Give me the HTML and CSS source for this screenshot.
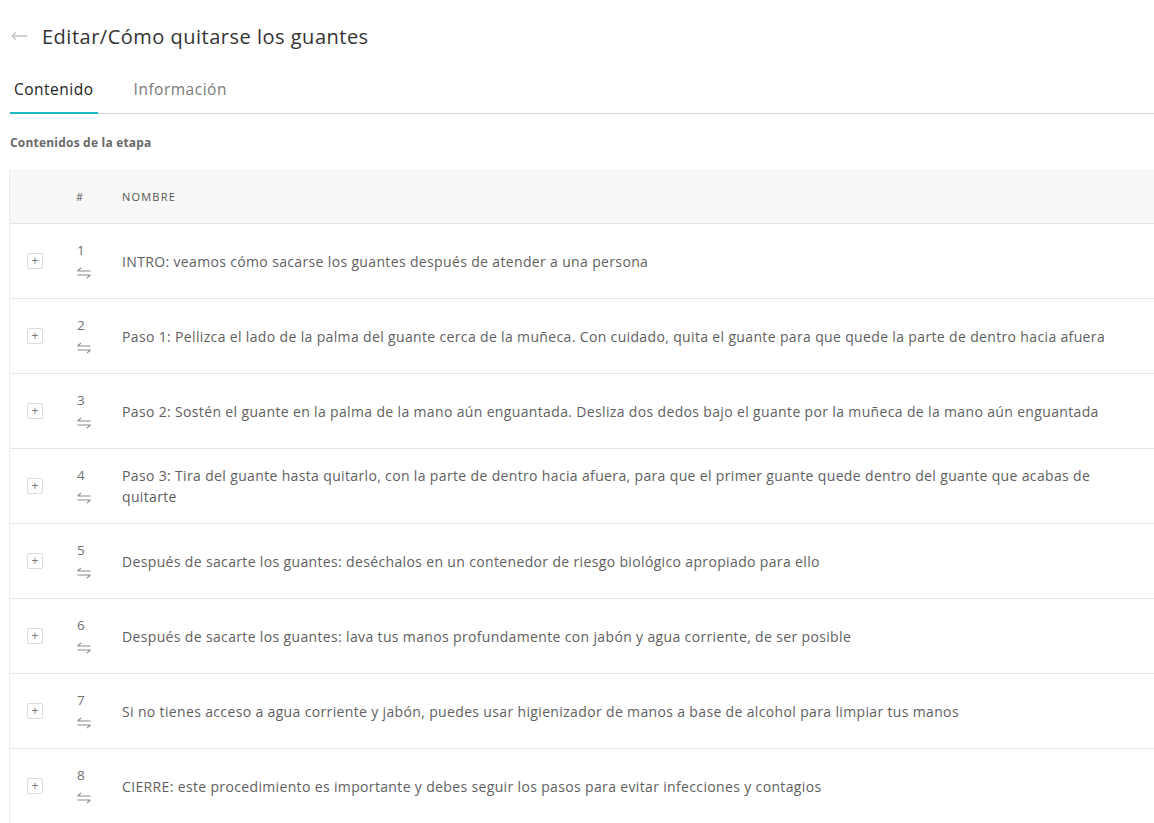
FILE: index.html
```html
<!DOCTYPE html>
<html lang="es">
<head>
<meta charset="utf-8">
<title>Editar/Cómo quitarse los guantes</title>
<link rel="stylesheet" href="styles.css">
</head>
<body>
<header class="page-header">
  <svg class="back" width="17" height="10" viewBox="0 0 17 10"><path d="M16.5 5H1.2M5 1.2L1.2 5L5 8.8" fill="none" stroke="#c4c4c4" stroke-width="1.3"/></svg>
  <h1 class="title">Editar/Cómo quitarse los guantes</h1>
</header>
<nav class="tabs">
  <div class="tab active">Contenido</div>
  <div class="tab">Información</div>
</nav>
<h2 class="section-label">Contenidos de la etapa</h2>
<div class="table">
  <div class="thead">
    <div></div>
    <div class="th">#</div>
    <div class="th">NOMBRE</div>
  </div>
  <div class="row">
    <div class="cell-btn"><span class="plus">+</span></div>
    <div class="cell-num"><span>1</span><svg class="swap" viewBox="0 0 14 12"><path d="M0.5 4H13.5M0.5 4L4.2 0.8M13.5 8H0.5M13.5 8L9.8 11.2" fill="none" stroke="#8a8a8a" stroke-width="1.1"/></svg></div>
    <div class="cell-name">INTRO: veamos cómo sacarse los guantes después de atender a una persona</div>
  </div>
  <div class="row">
    <div class="cell-btn"><span class="plus">+</span></div>
    <div class="cell-num"><span>2</span><svg class="swap" viewBox="0 0 14 12"><path d="M0.5 4H13.5M0.5 4L4.2 0.8M13.5 8H0.5M13.5 8L9.8 11.2" fill="none" stroke="#8a8a8a" stroke-width="1.1"/></svg></div>
    <div class="cell-name">Paso 1: Pellizca el lado de la palma del guante cerca de la muñeca. Con cuidado, quita el guante para que quede la parte de dentro hacia afuera</div>
  </div>
  <div class="row">
    <div class="cell-btn"><span class="plus">+</span></div>
    <div class="cell-num"><span>3</span><svg class="swap" viewBox="0 0 14 12"><path d="M0.5 4H13.5M0.5 4L4.2 0.8M13.5 8H0.5M13.5 8L9.8 11.2" fill="none" stroke="#8a8a8a" stroke-width="1.1"/></svg></div>
    <div class="cell-name">Paso 2: Sostén el guante en la palma de la mano aún enguantada. Desliza dos dedos bajo el guante por la muñeca de la mano aún enguantada</div>
  </div>
  <div class="row">
    <div class="cell-btn"><span class="plus">+</span></div>
    <div class="cell-num"><span>4</span><svg class="swap" viewBox="0 0 14 12"><path d="M0.5 4H13.5M0.5 4L4.2 0.8M13.5 8H0.5M13.5 8L9.8 11.2" fill="none" stroke="#8a8a8a" stroke-width="1.1"/></svg></div>
    <div class="cell-name">Paso 3: Tira del guante hasta quitarlo, con la parte de dentro hacia afuera, para que el primer guante quede dentro del guante que acabas de quitarte</div>
  </div>
  <div class="row">
    <div class="cell-btn"><span class="plus">+</span></div>
    <div class="cell-num"><span>5</span><svg class="swap" viewBox="0 0 14 12"><path d="M0.5 4H13.5M0.5 4L4.2 0.8M13.5 8H0.5M13.5 8L9.8 11.2" fill="none" stroke="#8a8a8a" stroke-width="1.1"/></svg></div>
    <div class="cell-name">Después de sacarte los guantes: deséchalos en un contenedor de riesgo biológico apropiado para ello</div>
  </div>
  <div class="row">
    <div class="cell-btn"><span class="plus">+</span></div>
    <div class="cell-num"><span>6</span><svg class="swap" viewBox="0 0 14 12"><path d="M0.5 4H13.5M0.5 4L4.2 0.8M13.5 8H0.5M13.5 8L9.8 11.2" fill="none" stroke="#8a8a8a" stroke-width="1.1"/></svg></div>
    <div class="cell-name">Después de sacarte los guantes: lava tus manos profundamente con jabón y agua corriente, de ser posible</div>
  </div>
  <div class="row">
    <div class="cell-btn"><span class="plus">+</span></div>
    <div class="cell-num"><span>7</span><svg class="swap" viewBox="0 0 14 12"><path d="M0.5 4H13.5M0.5 4L4.2 0.8M13.5 8H0.5M13.5 8L9.8 11.2" fill="none" stroke="#8a8a8a" stroke-width="1.1"/></svg></div>
    <div class="cell-name">Si no tienes acceso a agua corriente y jabón, puedes usar higienizador de manos a base de alcohol para limpiar tus manos</div>
  </div>
  <div class="row">
    <div class="cell-btn"><span class="plus">+</span></div>
    <div class="cell-num"><span>8</span><svg class="swap" viewBox="0 0 14 12"><path d="M0.5 4H13.5M0.5 4L4.2 0.8M13.5 8H0.5M13.5 8L9.8 11.2" fill="none" stroke="#8a8a8a" stroke-width="1.1"/></svg></div>
    <div class="cell-name">CIERRE: este procedimiento es importante y debes seguir los pasos para evitar infecciones y contagios</div>
  </div>
</div>
</body>
</html>
```

FILE: styles.css
```css
html, body {
  margin: 0;
  padding: 0;
  background: #ffffff;
  overflow: hidden;
}
body {
  font-family: "Open Sans", "Noto Sans", sans-serif;
  color: #5f5f5f;
}
.page-header {
  display: flex;
  align-items: center;
  height: 40px;
  padding: 16px 0 0 11px;
}
.back {
  display: block;
  margin-right: 14px;
}
.title {
  margin: 0;
  font-size: 20px;
  font-weight: 400;
  color: #333333;
  letter-spacing: 0.5px;
}
.tabs {
  display: flex;
  margin: 23px 0 0 10px;
  border-bottom: 1px solid #d6d6d6;
}
.tab {
  padding: 0 4px 13px;
  margin-right: 32px;
  font-size: 15.5px;
  line-height: 20px;
  color: #7a7a7a;
  letter-spacing: 0.5px;
  margin-bottom: -1px;
  border-bottom: 2px solid transparent;
}
.tab.active {
  color: #222222;
  border-bottom-color: #1ab9c2;
}
.section-label {
  margin: 21px 0 0 10px;
  font-size: 12px;
  font-weight: 700;
  color: #6a6a6a;
  line-height: 16px;
  letter-spacing: 0.2px;
}
.table {
  margin: 18px 0 0 9px;
  border-left: 1px solid #ececec;
}
.thead, .row {
  display: grid;
  grid-template-columns: 66px 46px 1fr;
  align-items: center;
}
.thead {
  height: 54px;
  background: #f8f8f8;
  border-bottom: 1px solid #e3e3e3;
}
.th {
  font-size: 11px;
  letter-spacing: 1.2px;
  color: #555555;
}
.row {
  height: 74px;
  border-bottom: 1px solid #e6e6e6;
}
.cell-btn {
  padding-left: 17px;
}
.plus {
  display: flex;
  align-items: center;
  justify-content: center;
  width: 14px;
  height: 14px;
  border: 1px solid #dcdcdc;
  border-radius: 2px;
  font-size: 12px;
  line-height: 1;
  color: #777777;
}
.cell-num {
  display: flex;
  flex-direction: column;
  align-items: flex-start;
  gap: 9px;
  font-size: 13.5px;
  line-height: 16px;
  color: #707070;
  padding: 0 0 2px 1px;
}
.swap {
  width: 14px;
  height: 12px;
  display: block;
}
.cell-name {
  font-size: 14px;
  line-height: 21px;
  color: #5f5f5f;
  padding-right: 32px;
  letter-spacing: 0.35px;
}
```
